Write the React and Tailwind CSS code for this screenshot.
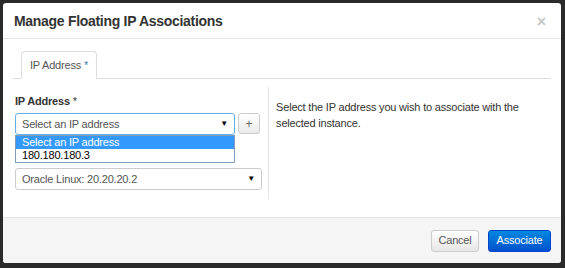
export default function App() {
  return (
    <div className="w-[565px] h-[268px] bg-[#2a2a2a] pt-[3px] pl-[3px] pr-[4px] pb-[5px]" style={{ fontFamily: '"Liberation Sans", Arial, sans-serif' }}>
      <div className="w-full h-full bg-white rounded-[3px] flex flex-col overflow-hidden tracking-[-0.2px]">
        <div className="h-[36px] border-b border-[#e5e5e5] flex items-center justify-between pl-[11px] pr-[15px] pt-[2px]">
          <h3 className="text-[14px] font-bold text-[#333] tracking-[-0.3px]">Manage Floating IP Associations</h3>
          <span className="text-[16px] font-bold text-[#c8c8c8] leading-none">×</span>
        </div>
        <div className="flex-1 px-[10px] pt-[12px]">
          <div className="flex border-b border-[#ddd] h-[28px]">
            <div className="ml-[8px] px-[8px] border border-[#ddd] border-b-white rounded-t-[4px] bg-white h-[28px] flex items-center text-[11px] text-[#555] mb-[-1px]">
              IP Address <span className="text-[#3a87ad] ml-[3px]">*</span>
            </div>
          </div>
          <div className="flex mt-[14px]">
            <div className="w-[257px] pl-[2px]">
              <div className="text-[11px] font-bold text-[#333] leading-[16px]">IP Address <span className="font-normal">*</span></div>
              <div className="flex mt-[4px] gap-[3px]">
                <div className="relative">
                  <div className="w-[220px] h-[22px] border border-[#66afe9] rounded-[3px] flex items-center justify-between px-[6px] text-[11px] text-[#555]">
                    <span>Select an IP address</span>
                    <span className="text-[8px] text-black">▼</span>
                  </div>
                  <div className="absolute left-0 top-[22px] w-[220px] border border-[#7f9db9] bg-white text-[11px] text-black">
                    <div className="bg-[#3399ff] text-white h-[13px] leading-[13px] px-[6px]">Select an IP address</div>
                    <div className="h-[13px] leading-[13px] px-[6px]">180.180.180.3</div>
                  </div>
                </div>
                <div className="w-[22px] h-[21px] border border-[#ccc] rounded-[3px] bg-gradient-to-b from-white to-[#eaeaea] flex items-center justify-center text-[12px] text-[#666]">+</div>
              </div>
              <div className="mt-[33px] w-[247px] h-[22px] border border-[#ccc] rounded-[3px] flex items-center justify-between px-[6px] text-[11px] text-[#555]">
                <span>Oracle Linux: 20.20.20.2</span>
                <span className="text-[8px] text-black">▼</span>
              </div>
            </div>
            <div className="border-l border-[#e5e5e5] h-[112px] mt-[-6px] pl-[7px] pt-[12px] text-[11px] text-[#333] leading-[16px] w-[285px]">
              Select the IP address you wish to associate with the selected instance.
            </div>
          </div>
        </div>
        <div className="h-[46px] bg-[#f5f5f5] border-t border-[#e5e5e5] flex items-center justify-end gap-[9px] pr-[10px]">
          <div className="h-[22px] w-[48px] border border-[#ccc] rounded-[3px] bg-gradient-to-b from-white to-[#e6e6e6] text-[11px] text-[#555] flex items-center justify-center">Cancel</div>
          <div className="h-[22px] w-[63px] border border-[#0044cc] rounded-[3px] bg-gradient-to-b from-[#0088e0] to-[#0050cc] text-[11px] text-white flex items-center justify-center">Associate</div>
        </div>
      </div>
    </div>
  );
}
